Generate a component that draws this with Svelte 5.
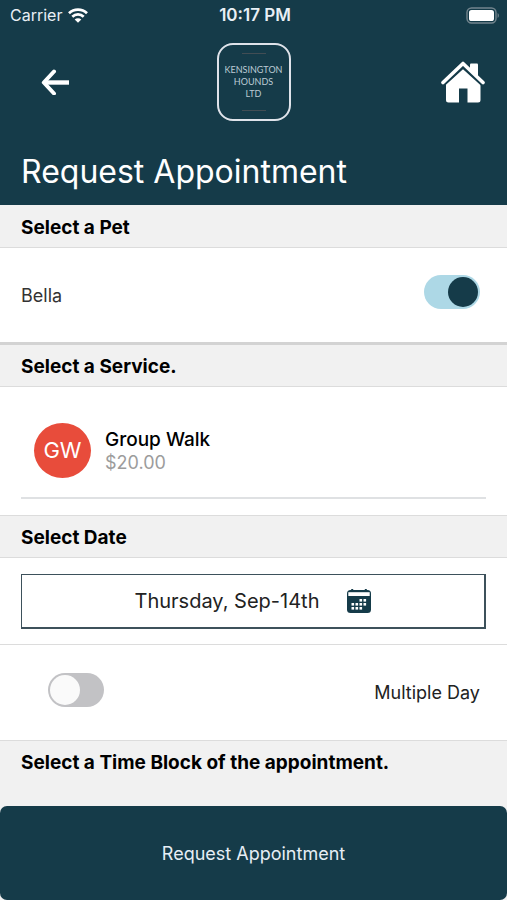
<script>
  let pets = $state([{ id: 'bella', name: 'Bella', selected: true }]);
  let multipleDay = $state(false);
  const services = [{ initials: 'GW', name: 'Group Walk', price: '$20.00' }];
  const dots = [
    [14, 10], [18, 10],
    [6, 14], [10, 14], [14, 14], [18, 14],
    [6, 18], [10, 18], [14, 18]
  ];
</script>

<div class="screen">
  <header>
    <div class="status">
      <span class="carrier">
        Carrier
        <svg width="20" height="15" viewBox="0 0 20 15" aria-hidden="true">
          <g fill="none" stroke="#fff" stroke-width="2.7">
            <path d="M1 5.3a12.8 12.8 0 0 1 18 0" />
            <path d="M4.3 8.8a8.1 8.1 0 0 1 11.4 0" />
          </g>
          <path d="M10 14.8 6.7 11.5a4.7 4.7 0 0 1 6.6 0z" fill="#fff" />
        </svg>
      </span>
      <span class="time">10:17 PM</span>
      <span class="battery">
        <svg width="34" height="17" viewBox="0 0 34 17" aria-hidden="true">
          <rect x="1" y="1" width="29" height="15" rx="4.5" fill="none" stroke="#73858e" stroke-width="1.4" />
          <rect x="3" y="3" width="25" height="11" rx="2.6" fill="#fff" />
          <path d="M31.6 6v5c1.7-.7 1.7-4.3 0-5z" fill="#73858e" />
        </svg>
      </span>
    </div>

    <nav>
      <button class="icon" aria-label="Back">
        <svg width="28" height="26" viewBox="0 0 28 26" aria-hidden="true">
          <path d="M13 2.500 2.800 13.500 13 24.500" fill="none" stroke="#fff" stroke-width="4" stroke-linecap="round" stroke-linejoin="round" />
          <path d="M3 13.500h25" fill="none" stroke="#fff" stroke-width="4.400" />
        </svg>
      </button>
      <div class="logo">
        <span class="rule"></span>
        <span class="brand">KENSINGTON<br />HOUNDS<br />LTD</span>
        <span class="rule"></span>
      </div>
      <a class="icon home" href="#home" aria-label="Home">
        <svg width="44" height="42" viewBox="0 0 44 42" aria-hidden="true">
          <path d="M22 7.500 39.500 23V39q0 2.500-2.500 2.500H26.500V27.500H18V41.500H7.500Q5 41.500 5 39V23z" fill="#fff" />
          <path d="M0 24 22 4 44 24" fill="none" stroke="#153b49" stroke-width="6.400" />
          <path d="M30 2.500h6q1 0 1 1V17L29 9.500v-6q0-1 1-1z" fill="#fff" />
          <path d="M2 21.500 22 2.500 42 21.500" fill="none" stroke="#fff" stroke-width="3.600" stroke-linecap="round" stroke-linejoin="round" />
        </svg>
      </a>
    </nav>

    <h1>Request Appointment</h1>
  </header>

  <main>
    <h2>Select a Pet</h2>
    {#each pets as pet (pet.id)}
      <div class="row">
        <label for={pet.id}>{pet.name}</label>
        <input id={pet.id} type="checkbox" role="switch" bind:checked={pet.selected} />
      </div>
    {/each}

    <h2 class="heavy">Select a Service.</h2>
    <div class="services">
      {#each services as service}
        <button class="service">
          <span class="avatar">{service.initials}</span>
          <span class="details">
            <span class="name">{service.name}</span>
            <span class="price">{service.price}</span>
          </span>
        </button>
      {/each}
    </div>

    <h2 class="ruled">Select Date</h2>
    <div class="date-area">
      <button class="date">
        Thursday, Sep-14th
        <svg width="24" height="24" viewBox="0 0 24 24" aria-hidden="true">
          <rect y="1" width="24" height="23" rx="3.500" fill="#153b49" />
          <rect x="1.300" y="3.200" width="21.400" height="3.800" fill="#fff" />
          <path d="M5.200 0v2M18.800 0v2" stroke="#153b49" stroke-width="2" stroke-linecap="round" />
          {#each dots as [x, y]}
            <rect x={x - 1.5} {y} width="2.600" height="2.600" fill="#fff" />
          {/each}
        </svg>
      </button>
    </div>
    <div class="row multiple">
      <input id="multiple" type="checkbox" role="switch" bind:checked={multipleDay} />
      <label for="multiple">Multiple Day</label>
    </div>

    <h2 class="ruled last">Select a Time Block of the appointment.</h2>
  </main>

  <button class="submit">Request Appointment</button>
</div>

<style>
  :global(body) {
    margin: 0;
  }
  .screen {
    --navy: #153b49;
    --line: #dcdcdc;
    display: flex;
    flex-direction: column;
    min-height: 100vh;
    background: #f1f1f1;
    color: #000;
    font-family: Inter, 'Liberation Sans', sans-serif;
    font-size: 18px;
  }
  .screen * {
    box-sizing: border-box;
  }
  svg {
    display: block;
    flex: none;
  }
  button {
    margin: 0;
    padding: 0;
    border: 0;
    background: none;
    color: inherit;
    font: inherit;
    cursor: pointer;
  }
  header {
    background: var(--navy);
    color: #fff;
  }
  .status {
    display: grid;
    grid-template-columns: 1fr auto 1fr;
    align-items: center;
    height: 30px;
    padding: 0 7px 0 10px;
    font-size: 16px;
    color: #e9eff5;
  }
  .carrier {
    display: flex;
    align-items: center;
    gap: 6px;
  }
  .time {
    font-size: 17px;
    font-weight: 600;
  }
  .battery {
    justify-self: end;
  }
  nav {
    display: grid;
    grid-template-columns: 1fr auto 1fr;
    align-items: center;
    padding: 13px 22px 0 41px;
  }
  nav .icon {
    justify-self: start;
  }
  nav .home {
    justify-self: end;
  }
  .logo {
    display: flex;
    flex-direction: column;
    align-items: center;
    justify-content: space-between;
    width: 74px;
    height: 78px;
    margin-right: 19px;
    padding: 8px 0;
    border: 2px solid #dfe3ea;
    border-radius: 16px;
    color: #bccbd5;
    font-family: Lato, Inter, sans-serif;
    font-size: 9px;
    line-height: 12px;
    text-align: center;
  }
  .rule {
    width: 24px;
    height: 1px;
    background: #424d54;
  }
  h1 {
    margin: 0;
    padding: 31px 21px 13px;
    font-size: 32px;
    font-weight: 400;
    line-height: 40px;
  }
  h2 {
    margin: 0;
    padding: 11px 21px 7px;
    border-bottom: 1px solid var(--line);
    background: #f1f1f1;
    font-size: 19px;
    font-weight: 700;
    line-height: 24px;
  }
  .heavy {
    padding-top: 10px;
    border-top: 3px solid #d3d3d3;
  }
  .ruled {
    padding-top: 10px;
    border-top: 1px solid var(--line);
  }
  .last {
    border-bottom: 0;
  }
  .row {
    display: flex;
    align-items: center;
    justify-content: space-between;
    height: 94px;
    padding: 0 27px 0 21px;
    background: #fff;
    color: #333;
  }
  .row input {
    appearance: none;
    width: 56px;
    height: 34px;
    margin: 0 0 6px;
    padding: 2px;
    border-radius: 17px;
    background: #c2c2c5;
    cursor: pointer;
  }
  .row input::before {
    content: '';
    display: block;
    width: 30px;
    height: 30px;
    border-radius: 50%;
    background: #fafafa;
  }
  .row input:checked {
    background: #add8e6;
  }
  .row input:checked::before {
    margin-left: auto;
    background: var(--navy);
  }
  .multiple {
    height: 96px;
    padding-left: 48px;
    border-top: 1px solid var(--line);
    color: #222;
  }
  .services {
    padding: 0 21px 16px;
    background: #fff;
  }
  .service {
    display: flex;
    align-items: center;
    gap: 14px;
    width: 100%;
    padding: 36px 13px 19px;
    border-bottom: 2px solid #dfe1e3;
    text-align: left;
  }
  .avatar {
    display: grid;
    place-items: center;
    width: 57px;
    height: 55px;
    padding-bottom: 2px;
    border-radius: 50%;
    background: #e84c3b;
    color: #fff;
    font-size: 22px;
  }
  .details {
    display: flex;
    flex-direction: column;
    line-height: 23px;
  }
  .name {
    font-size: 19px;
    font-weight: 500;
  }
  .price {
    color: #9c9c9c;
  }
  .date-area {
    padding: 16px 21px 15px;
    background: #fff;
  }
  .date {
    display: flex;
    align-items: center;
    justify-content: center;
    gap: 28px;
    width: 100%;
    height: 55px;
    border: 2px solid #3d515b;
    border-top-width: 1px;
    border-left-width: 1px;
    font-size: 20px;
    color: #222;
  }
  .submit {
    height: 94px;
    margin-top: auto;
    border-radius: 7px;
    background: var(--navy);
    color: #e6eef5;
  }
</style>
